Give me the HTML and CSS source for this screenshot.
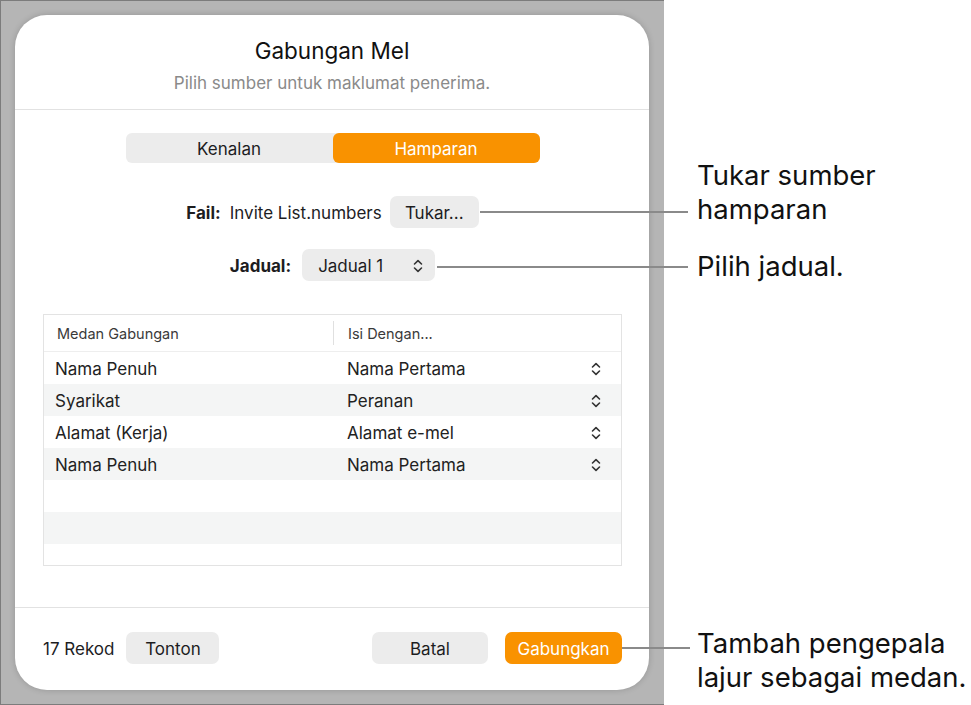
FILE: index.html
```html
<!DOCTYPE html>
<html lang="ms">
<head>
<meta charset="utf-8">
<title>Gabungan Mel</title>
<link rel="stylesheet" href="styles.css">
</head>
<body>
<div class="page">
  <div class="frame">
    <div class="card">
      <header class="card-head">
        <h1 class="title">Gabungan Mel</h1>
        <p class="subtitle">Pilih sumber untuk maklumat penerima.</p>
      </header>
      <main class="card-body">
        <div class="segmented">
          <div class="seg">Kenalan</div>
          <div class="seg seg-on">Hamparan</div>
        </div>
        <div class="field-row">
          <span class="label">Fail:</span>
          <span class="value">Invite List.numbers</span>
          <span class="btn btn-tukar">Tukar...</span>
        </div>
        <div class="field-row row-jadual">
          <span class="label">Jadual:</span>
          <span class="btn popup">Jadual 1
            <svg class="chev" width="10" height="14" viewBox="0 0 10 14"><path d="M1.5 5 L5 1.6 L8.5 5 M1.5 9 L5 12.4 L8.5 9" fill="none" stroke="#333" stroke-width="1.6" stroke-linecap="round" stroke-linejoin="round"/></svg>
          </span>
        </div>
        <div class="table">
          <div class="thead">
            <div class="th th1">Medan Gabungan</div>
            <div class="th th2">Isi Dengan...</div>
          </div>
          <div class="tr"><div class="td td1">Nama Penuh</div><div class="td td2">Nama Pertama<svg class="chev" width="10" height="14" viewBox="0 0 10 14"><path d="M1.5 5 L5 1.6 L8.5 5 M1.5 9 L5 12.4 L8.5 9" fill="none" stroke="#333" stroke-width="1.6" stroke-linecap="round" stroke-linejoin="round"/></svg></div></div>
          <div class="tr alt"><div class="td td1">Syarikat</div><div class="td td2">Peranan<svg class="chev" width="10" height="14" viewBox="0 0 10 14"><path d="M1.5 5 L5 1.6 L8.5 5 M1.5 9 L5 12.4 L8.5 9" fill="none" stroke="#333" stroke-width="1.6" stroke-linecap="round" stroke-linejoin="round"/></svg></div></div>
          <div class="tr"><div class="td td1">Alamat (Kerja)</div><div class="td td2">Alamat e-mel<svg class="chev" width="10" height="14" viewBox="0 0 10 14"><path d="M1.5 5 L5 1.6 L8.5 5 M1.5 9 L5 12.4 L8.5 9" fill="none" stroke="#333" stroke-width="1.6" stroke-linecap="round" stroke-linejoin="round"/></svg></div></div>
          <div class="tr alt"><div class="td td1">Nama Penuh</div><div class="td td2">Nama Pertama<svg class="chev" width="10" height="14" viewBox="0 0 10 14"><path d="M1.5 5 L5 1.6 L8.5 5 M1.5 9 L5 12.4 L8.5 9" fill="none" stroke="#333" stroke-width="1.6" stroke-linecap="round" stroke-linejoin="round"/></svg></div></div>
          <div class="tr"></div>
          <div class="tr alt"></div>
          <div class="tr tr-last"></div>
        </div>
      </main>
      <footer class="card-foot">
        <span class="count">17 Rekod</span>
        <span class="btn btn-tonton">Tonton</span>
        <span class="spacer"></span>
        <span class="btn btn-batal">Batal</span>
        <span class="btn btn-go">Gabungkan</span>
      </footer>
    </div>
  </div>

  <div class="callout c1">Tukar sumber<br>hamparan</div>
  <div class="callout c2">Pilih jadual.</div>
  <div class="callout c3">Tambah pengepala<br>lajur sebagai medan.</div>
  <div class="leader l1"></div>
  <div class="leader l2"></div>
  <div class="leader l3"></div>
</div>
</body>
</html>
```

FILE: styles.css
```css
* { box-sizing: border-box; }
html, body { margin: 0; padding: 0; background: #fff; }
body {
  font-family: Inter, "Liberation Sans", sans-serif;
  color: #1d1d1f;
}
.page {
  position: relative;
  width: 971px;
  height: 705px;
  overflow: hidden;
}
.frame {
  width: 664px;
  height: 705px;
  background: #b5b5b5;
  border-top: 1px solid #7c7c7c;
  border-left: 1px solid #7c7c7c;
  border-bottom: 1px solid #7c7c7c;
  padding: 14px 0 0 14px;
}
.card {
  width: 634px;
  height: 675px;
  background: #fff;
  border-radius: 32px;
  box-shadow: 0 0 6px rgba(0,0,0,0.18);
  display: flex;
  flex-direction: column;
}
.card-head {
  padding: 23px 0 15px;
  border-bottom: 1px solid #e2e2e2;
  text-align: center;
}
.title {
  margin: 0;
  font-size: 22.5px;
  line-height: 26px;
  font-weight: 400;
  color: #111;
}
.subtitle {
  margin: 8px 0 0;
  font-size: 17px;
  line-height: 22px;
  color: #8a8a8a;
}
.card-body {
  flex: 1;
  display: flex;
  flex-direction: column;
  align-items: center;
  padding: 23px 27px 0 28px;
  border-bottom: 1px solid #e2e2e2;
}
.segmented {
  display: flex;
  width: 414px;
  height: 30px;
  background: #ececec;
  border-radius: 6px;
}
.seg {
  flex: 1;
  display: flex;
  align-items: center;
  justify-content: center;
  font-size: 17px;
  color: #1d1d1f;
  border-radius: 6px;
  padding-top: 2px;
}
.seg-on {
  background: #f99200;
  color: #fff;
}
.field-row {
  display: flex;
  align-items: center;
  margin-top: 33px;
  font-size: 17px;
  height: 32px;
}
.row-jadual { margin-top: 21px; }
.label { font-weight: 700; color: #1d1d1f; margin-right: 9px; padding-top: 1px; }
.row-jadual .label { margin-right: 11px; }
.value { margin-right: 8px; padding-top: 1px; }
.btn {
  display: inline-flex;
  align-items: center;
  justify-content: center;
  height: 32px;
  background: #ececec;
  border-radius: 7px;
  font-size: 17px;
  color: #1d1d1f;
  padding-top: 1px;
}
.btn-tukar { width: 89px; }
.popup {
  width: 133px;
  justify-content: space-between;
  padding: 1px 12px 0 16px;
}
.chev { display: block; }
.table {
  align-self: stretch;
  margin-top: 33px;
  border: 1px solid #e3e3e3;
  display: flex;
  flex-direction: column;
}
.thead {
  display: flex;
  height: 37px;
  align-items: center;
  border-bottom: 1px solid #eeeeee;
}
.th {
  font-size: 14.5px;
  color: #3a3a3a;
  height: 24px;
  display: flex;
  align-items: center;
  padding-top: 1px;
}
.th1 { width: 290px; padding-left: 13px; border-right: 1px solid #e0e0e0; }
.th2 { padding-left: 14px; }
.tr {
  display: flex;
  height: 32px;
  align-items: center;
}
.tr.alt { background: #f4f5f5; }
.tr-last { height: 21px; }
.td { font-size: 17px; color: #222; padding-top: 1px; }
.td1 { width: 290px; padding-left: 11px; }
.td2 {
  flex: 1;
  display: flex;
  align-items: center;
  justify-content: space-between;
  padding-left: 13px;
  padding-right: 20px;
}
.card-foot {
  height: 82px;
  display: flex;
  align-items: center;
  padding: 0 27px 2px 28px;
}
.count { font-size: 17px; color: #1d1d1f; margin-right: 12px; padding-top: 1px; }
.btn-tonton { width: 93px; }
.spacer { flex: 1; }
.btn-batal { width: 116px; margin-right: 17px; }
.btn-go { width: 117px; background: #f99200; color: #fff; }

.callout {
  position: absolute;
  left: 697px;
  font-family: Inter, "Liberation Sans", sans-serif;
  font-size: 27.5px;
  line-height: 34px;
  color: #111;
}
.c1 { top: 158px; }
.c2 { top: 249px; }
.c3 { top: 626px; }
.leader {
  position: absolute;
  height: 2px;
  background: #8a8a8a;
}
.l1 { left: 480px; width: 208px; top: 211px; }
.l2 { left: 437px; width: 251px; top: 266px; }
.l3 { left: 622px; width: 68px; top: 647px; }
```
